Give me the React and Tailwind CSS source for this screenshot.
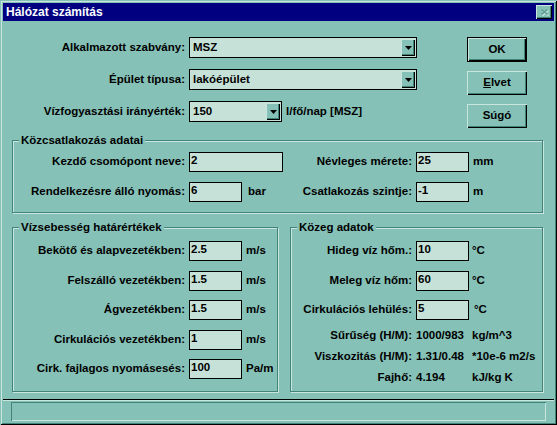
import React from 'react';

// Win9x "spruce" colours
// face #85c1b7, light #c8e6de, shadow #43847a, field #c6e2d8

const DropArrow = () => (
  <svg width="7" height="4" viewBox="0 0 7 4" className="block">
    <path d="M0 0h7L3.5 4z" fill="#000" />
  </svg>
);

// Combo box with drop button
const Combo = ({ value, width }) => (
  <div className={`flex items-start h-[21px] border border-black bg-[#c6e2d8] ${width}`}>
    <span className="flex-1 pl-[3px] pt-[2px] leading-[14px]">{value}</span>
    <div className="mt-[1px] mr-[1px] w-[14px] h-[17px] flex items-center justify-center bg-[#85c1b7] shadow-[inset_1px_1px_0_#c8e6de,inset_-1px_-1px_0_#000,inset_-2px_-2px_0_#43847a]">
      <DropArrow />
    </div>
  </div>
);

// Edit field
const Field = ({ value, width = 'w-[53px]' }) => (
  <div className={`h-[20px] border border-black bg-[#c6e2d8] pl-[1px] leading-[15px] ${width}`}>
    {value}
  </div>
);

const Button = ({ children, isDefault }) => (
  <div
    className={
      isDefault
        ? 'w-[60px] h-[25px] border border-black flex items-center justify-center bg-[#85c1b7] shadow-[inset_1px_1px_0_#c8e6de,inset_-1px_-1px_0_#000,inset_-2px_-2px_0_#43847a]'
        : 'w-[60px] h-[24px] flex items-center justify-center bg-[#85c1b7] shadow-[inset_1px_1px_0_#c8e6de,inset_-1px_-1px_0_#000,inset_-2px_-2px_0_#43847a]'
    }
  >
    {children}
  </div>
);

// Etched group box with caption
const Group = ({ title, className, children }) => (
  <div className={`relative border border-[#43847a] shadow-[inset_1px_1px_0_#c8e6de,1px_1px_0_#c8e6de] ${className}`}>
    <span className="absolute -top-[8px] left-[6px] px-[2px] bg-[#85c1b7] leading-[14px] whitespace-nowrap">
      {title}
    </span>
    {children}
  </div>
);

const FieldRow = ({ label, labelW, value, unit, unitGap = 'ml-[4px]' }) => (
  <div className="flex items-center h-[20px]">
    <span className={`text-right pr-[4px] whitespace-nowrap ${labelW}`}>{label}</span>
    <Field value={value} />
    <span className={`whitespace-nowrap ${unitGap}`}>{unit}</span>
  </div>
);

const InfoRow = ({ label, value, unit }) => (
  <div className="flex items-center h-[21px]">
    <span className="w-[125px] text-right pr-[4px] whitespace-nowrap">{label}</span>
    <span className="w-[56px] whitespace-nowrap">{value}</span>
    <span className="whitespace-nowrap">{unit}</span>
  </div>
);

export default function App() {
  return (
    <div className="w-[557px] h-[425px] overflow-hidden bg-[#85c1b7] p-[3px] flex flex-col font-['Liberation_Sans',Arial,sans-serif] font-bold text-[11.5px] text-black shadow-[inset_1px_1px_0_#85c1b7,inset_-1px_-1px_0_#000,inset_2px_2px_0_#c8e6de,inset_-2px_-2px_0_#43847a]">
      {/* title bar */}
      <div className="h-[18px] shrink-0 bg-[#000080] flex items-center justify-between pl-[3px] pr-[2px]">
        <span className="text-white text-[12px] leading-none">Hálózat számítás</span>
        <div className="w-[16px] h-[14px] flex items-center justify-center bg-[#85c1b7] shadow-[inset_1px_1px_0_#c8e6de,inset_-1px_-1px_0_#000,inset_-2px_-2px_0_#43847a]">
          <svg width="9" height="8" viewBox="0 0 9 8">
            <path d="M1.5 1.5l6 5M7.5 1.5l-6 5" stroke="#c8e6de" strokeWidth="1.6" transform="translate(1 1)" />
            <path d="M1.5 1.5l6 5M7.5 1.5l-6 5" stroke="#5f9e94" strokeWidth="1.6" />
          </svg>
        </div>
      </div>

      {/* content */}
      <div className="px-[9px] pt-[16px] flex flex-col">
        <div className="flex items-start">
          <div className="flex flex-col gap-[11px]">
            <div className="flex items-center h-[21px]">
              <span className="w-[177px] text-right pr-[4px] whitespace-nowrap">Alkalmazott szabvány:</span>
              <Combo value="MSZ" width="w-[228px]" />
            </div>
            <div className="flex items-center h-[21px]">
              <span className="w-[177px] text-right pr-[4px] whitespace-nowrap">Épület típusa:</span>
              <Combo value="lakóépület" width="w-[228px]" />
            </div>
            <div className="flex items-center h-[21px]">
              <span className="w-[177px] text-right pr-[4px] whitespace-nowrap">Vízfogyasztási irányérték:</span>
              <Combo value="150" width="w-[93px]" />
              <span className="ml-[4px] whitespace-nowrap">l/fő/nap [MSZ]</span>
            </div>
          </div>
          <div className="ml-[50px] flex flex-col gap-[9px]">
            <Button isDefault>OK</Button>
            <Button>
              <span><span className="underline">E</span>lvet</span>
            </Button>
            <Button>Súgó</Button>
          </div>
        </div>

        <Group title="Közcsatlakozás adatai" className="mt-[12px] w-[531px] h-[73px] pt-[11px]">
          <div className="flex">
            <div className="w-[270px] flex flex-col gap-[10px]">
              <div className="flex items-center h-[20px]">
                <span className="w-[176px] text-right pr-[4px] whitespace-nowrap">Kezdő csomópont neve:</span>
                <Field value="2" width="w-[94px]" />
              </div>
              <FieldRow label="Rendelkezésre álló nyomás:" labelW="w-[176px]" value="6" unit="bar" unitGap="ml-[6px]" />
            </div>
            <div className="flex flex-col gap-[10px]">
              <FieldRow label="Névleges mérete:" labelW="w-[133px]" value="25" unit="mm" />
              <FieldRow label="Csatlakozás szintje:" labelW="w-[133px]" value="-1" unit="m" />
            </div>
          </div>
        </Group>

        <div className="mt-[14px] flex">
          <Group title="Vízsebesség határértékek" className="w-[266px] h-[165px] pt-[13px]">
            <div className="flex flex-col gap-[9.5px]">
              <FieldRow label="Bekötő és alapvezetékben:" labelW="w-[176px]" value="2.5" unit="m/s" />
              <FieldRow label="Felszálló vezetékben:" labelW="w-[176px]" value="1.5" unit="m/s" />
              <FieldRow label="Ágvezetékben:" labelW="w-[176px]" value="1.5" unit="m/s" />
              <FieldRow label="Cirkulációs vezetékben:" labelW="w-[176px]" value="1" unit="m/s" />
              <FieldRow label="Cirk. fajlagos nyomásesés:" labelW="w-[176px]" value="100" unit="Pa/m" />
            </div>
          </Group>

          <Group title="Közeg adatok" className="ml-[12px] w-[253px] h-[165px] pt-[13px]">
            <div className="flex flex-col gap-[9.5px]">
              <FieldRow label="Hideg víz hőm.:" labelW="w-[125px]" value="10" unit="°C" unitGap="ml-[3px]" />
              <FieldRow label="Meleg víz hőm:" labelW="w-[125px]" value="60" unit="°C" unitGap="ml-[3px]" />
              <FieldRow label="Cirkulációs lehülés:" labelW="w-[125px]" value="5" unit="°C" unitGap="ml-[5px]" />
            </div>
            <div className="mt-[5px] flex flex-col">
              <InfoRow label="Sűrűség (H/M):" value="1000/983" unit="kg/m^3" />
              <InfoRow label="Viszkozitás (H/M):" value="1.31/0.48" unit="*10e-6 m2/s" />
              <InfoRow label="Fajhő:" value="4.194" unit="kJ/kg K" />
            </div>
          </Group>
        </div>
      </div>

      {/* status bar */}
      <div className="mt-[7px] h-[2px] shrink-0 border-t border-black border-b border-b-[#c8e6de]" />
      <div className="mt-[1px] mx-[8px] h-[19px] shrink-0 shadow-[inset_1px_1px_0_#43847a,inset_-1px_-1px_0_#c8e6de]" />
    </div>
  );
}
